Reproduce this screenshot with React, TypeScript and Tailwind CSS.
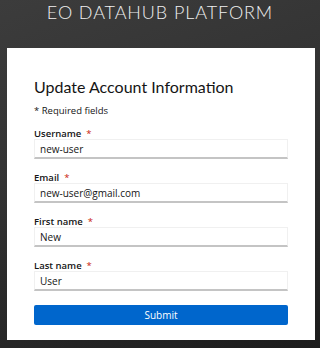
import * as React from "react";

const fields = [
  { id: "username", label: "Username", value: "new-user" },
  { id: "email", label: "Email", value: "new-user@gmail.com" },
  { id: "firstName", label: "First name", value: "New" },
  { id: "lastName", label: "Last name", value: "User" },
];

const App: React.FC = () => {
  return (
    <div
      className="w-[320px] h-[348px] overflow-hidden bg-[linear-gradient(160deg,#3c3c3c_0%,#333333_40%,#262626_75%,#1c1c1c_100%)]"
      style={{ fontFamily: '"Open Sans", "Noto Sans", sans-serif' }}
    >
      <div className="h-[48px] pt-[1px] flex justify-center">
        <h1
          className="text-[18px] leading-[22px] tracking-[0.05em] text-[#f0f0f0] font-light"
          style={{ fontFamily: 'Lato, "Open Sans", sans-serif' }}
        >
          EO DATAHUB PLATFORM
        </h1>
      </div>
      <div className="ml-[7px] w-[308px] bg-white px-[27px] pt-[29px] pb-[15px]">
        <h2
          className="text-[16px] leading-[20px] text-[#151515]"
          style={{ fontFamily: 'Lato, "Open Sans", sans-serif' }}
        >
          Update Account Information
        </h2>
        <p className="mt-[8px] text-[9.5px] leading-[12px] text-[#151515]">
          * Required fields
        </p>
        <form className="mt-[11px] flex flex-col gap-[13px]">
          {fields.map((f) => (
            <div key={f.id} className="flex flex-col">
              <label
                htmlFor={f.id}
                className="text-[9.5px] leading-[11px] font-semibold text-[#151515]"
              >
                {f.label}
                <span className="text-[#c9190b] ml-[5px] font-normal">*</span>
              </label>
              <input
                id={f.id}
                defaultValue={f.value}
                className="h-[20px] w-full border border-[#f0f0f0] border-b-[#c4c4c4] border-b-2 px-[5px] text-[10px] text-[#151515] outline-none"
              />
            </div>
          ))}
          <button
            type="button"
            className="mt-[1px] h-[20px] w-full rounded-[2px] bg-[#0066cc] text-white text-[10px]"
          >
            Submit
          </button>
        </form>
      </div>
    </div>
  );
};

export default App;
